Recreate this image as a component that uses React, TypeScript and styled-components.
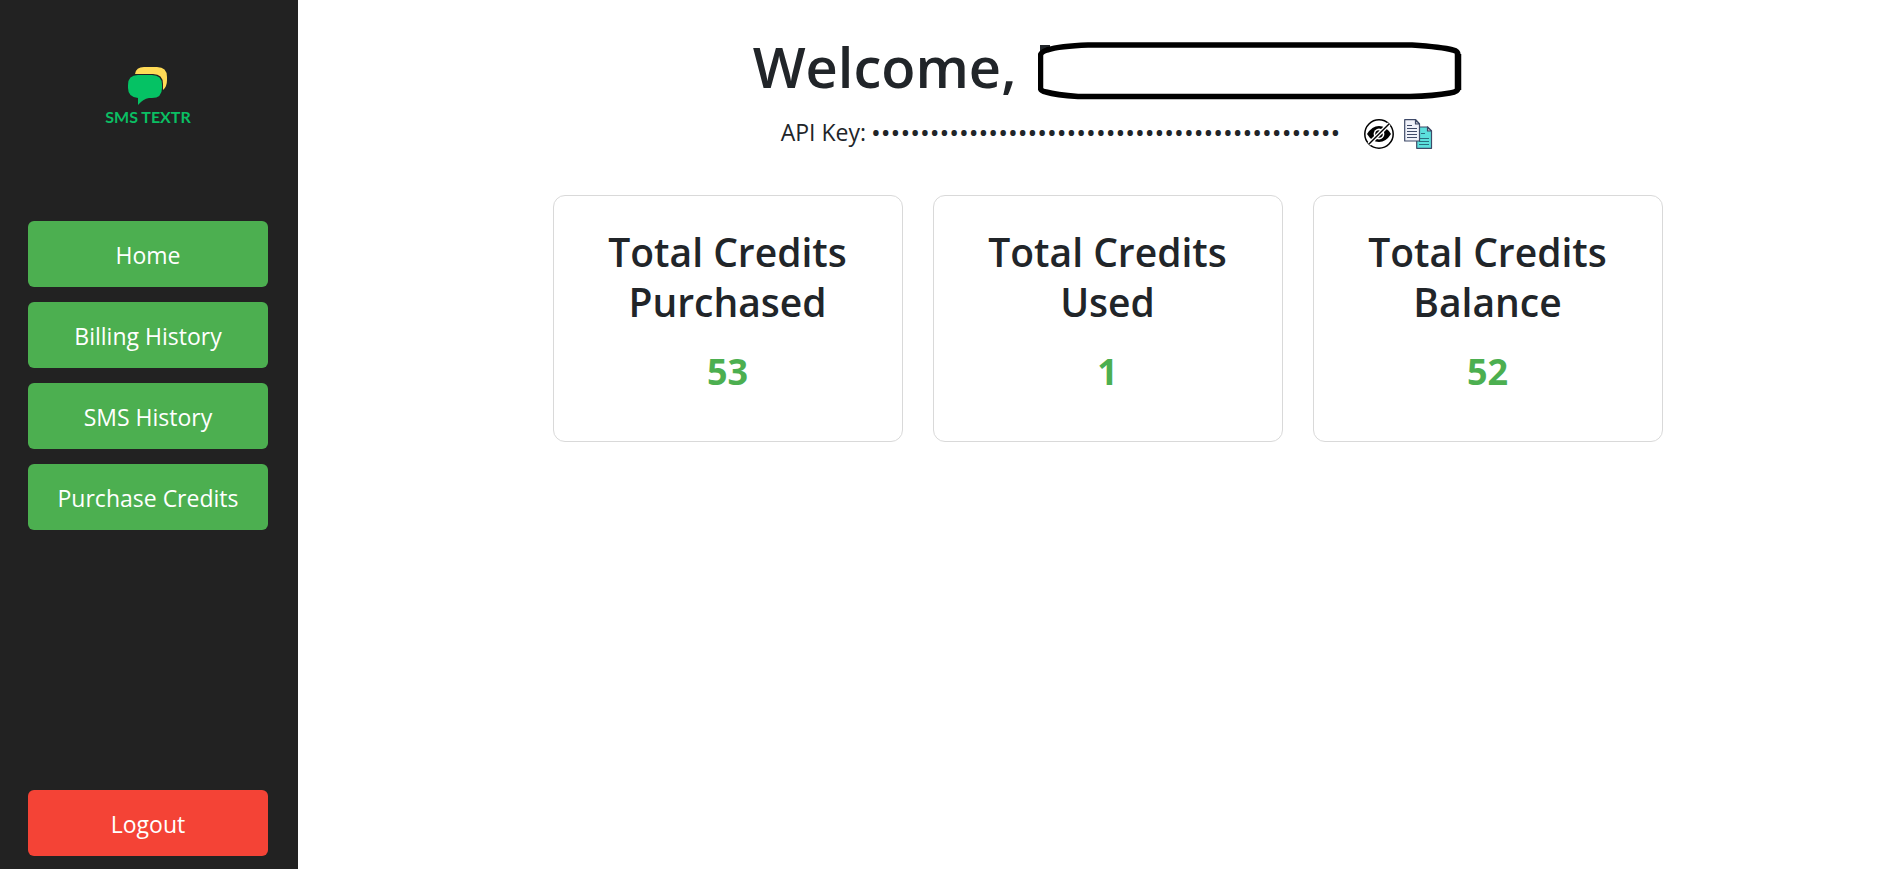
import React from "react";
import styled, { createGlobalStyle } from "styled-components";

const GlobalStyle = createGlobalStyle`
  *, *::before, *::after { box-sizing: border-box; }
  body {
    margin: 0;
    background: #fff;
    color: #212529;
    font-family: "Segoe UI", "Open Sans", "Noto Sans", sans-serif;
    font-size: 23px;
    line-height: 36px;
  }
`;

const Page = styled.div`
  display: flex;
  min-height: 100vh;
`;

const Sidebar = styled.aside`
  display: flex;
  flex-direction: column;
  flex: none;
  width: 298px;
  padding: 67px 30px 13px 28px;
  background: #222;
`;

const Brand = styled.a`
  display: flex;
  flex-direction: column;
  align-items: center;
  height: 154px;
  color: #0abf63;
  font-family: Lato, sans-serif;
  font-size: 16px;
  font-weight: 700;
  line-height: 20px;
  text-decoration: none;
`;

const Nav = styled.nav`
  display: flex;
  flex-direction: column;
  gap: 15px;
`;

const SideButton = styled.button<{ $danger?: boolean }>`
  width: 100%;
  height: 66px;
  padding: 2px 0 0;
  border: 0;
  border-radius: 6px;
  background: ${(p) => (p.$danger ? "#f44336" : "#4caf50")};
  color: #fff;
  font: inherit;
  cursor: pointer;
  ${(p) => p.$danger && "margin-top: auto;"}
`;

const Main = styled.main`
  display: flex;
  flex-direction: column;
  align-items: center;
  flex: 1;
  padding: 30px 0 30px 40px;
`;

const Title = styled.h1`
  display: flex;
  align-items: flex-end;
  gap: 22px;
  margin: 0 0 8px;
  font-size: 56px;
  font-weight: 600;
  line-height: 72px;
`;

const KeyRow = styled.div`
  display: flex;
  align-items: center;
  height: 44px;
  margin-bottom: 41px;
`;

const Dots = styled.span`
  margin: 0 24px 0 5px;
  font-size: 26px;
`;

const IconButton = styled.button`
  display: flex;
  width: 30px;
  height: 30px;
  margin: 4px 10px 0 0;
  padding: 0;
  border: 0;
  background: none;
  cursor: pointer;
  &:last-child { margin-right: 0; }
`;

const Cards = styled.div`
  display: flex;
  flex-wrap: wrap;
  justify-content: center;
  gap: 30px;
`;

const Card = styled.section`
  width: 350px;
  min-height: 247px;
  padding: 31px 40px;
  border: 1px solid #d9d9d9;
  border-radius: 12px;
  text-align: center;
`;

const CardTitle = styled.h2`
  margin: 0 0 18px;
  font-size: 39px;
  font-weight: 600;
  line-height: 50px;
`;

const CardValue = styled.p`
  margin: 0;
  color: #4caf50;
  font-size: 36px;
  font-weight: 700;
  line-height: 54px;
`;

const BubblesLogo = () => (
  <svg width="40" height="40" viewBox="0 0 40 40" aria-hidden="true">
    <path d="M16 0H29Q39 0 39 10V13Q39 20 35 23V17Q35 7 25 7H7Q8 0 16 0Z" fill="#ffdb57" />
    <path d="M10 8H24Q34 8 34 18V21Q34 31 24 31H21Q15 32 10 38V31Q0 30 0 21V18Q0 8 10 8Z" fill="#05c264" />
  </svg>
);

const NameOutline = () => (
  <svg width="424" height="60" viewBox="0 0 424 60" aria-hidden="true">
    <path d="M2 3H12V7L2 11Z" fill="#212529" />
    <path
      d="M2.500 13Q3 10 9 8Q22 4 50 3H374Q404 5 415 8Q420 9 420 13V46Q420 50 412 51Q396 54 372 54.500H40Q18 53 8 50Q2.500 49 2.500 46Z"
      fill="none"
      stroke="#000"
      strokeWidth="5.500"
    />
    <path d="M420 12V48" stroke="#000" strokeWidth="6.500" />
  </svg>
);

const HiddenIcon = () => (
  <svg width="30" height="30" viewBox="0 0 30 30" aria-hidden="true">
    <circle cx="15" cy="15" r="14.200" fill="#fff" stroke="#000" strokeWidth="1.500" />
    <path d="M3 15Q8 7 15 7T27 15Q22 23 15 23T3 15Z" fill="#000" />
    <circle cx="15" cy="15" r="5.400" fill="#fff" />
    <circle cx="15" cy="15" r="3.800" fill="#000" />
    <path d="M15 15V11.500A3.500 3.500 0 0 1 18.500 15Z" fill="#fff" />
    <path d="M5 25L25 5" stroke="#fff" strokeWidth="4" />
    <path d="M5 25L25 5" stroke="#000" strokeWidth="1.500" />
  </svg>
);

const CopyIcon = () => (
  <svg width="30" height="30" viewBox="0 0 30 30" aria-hidden="true">
    <g stroke="#3f4a68" strokeWidth="1.200" strokeLinejoin="round">
      <path d="M12.700 8H23.500L27.500 12V29.300H12.700Z" fill="#5ce0dd" />
      <path d="M23.500 8V12H27.500Z" fill="#c9d0d8" />
      <path d="M15 19.500H25M15 22.500H25M15 25.500H25M17 14.500H21" stroke="#2c6f80" />
      <path d="M0.700 0.700H11.500L15.500 5V22H0.700Z" fill="#f0f2fa" />
      <path d="M11.500 0.700V5H15.500Z" fill="#c9c9cf" />
      <path d="M3 6.500H8M3 9.500H13M3 12.500H13M3 15.500H13M3 18.500H13" />
    </g>
  </svg>
);

const navItems = ["Home", "Billing History", "SMS History", "Purchase Credits"];

const totals = [
  { label: "Purchased", value: 53 },
  { label: "Used", value: 1 },
  { label: "Balance", value: 52 },
];

export default function App() {
  return (
    <>
      <GlobalStyle />
      <Page>
        <Sidebar>
          <Brand href="#">
            <BubblesLogo />
            SMS TEXTR
          </Brand>
          <Nav>
            {navItems.map((item) => (
              <SideButton key={item} type="button">{item}</SideButton>
            ))}
          </Nav>
          <SideButton type="button" $danger>Logout</SideButton>
        </Sidebar>
        <Main>
          <Title>
            Welcome,
            <NameOutline />
          </Title>
          <KeyRow>
            <span>API Key:</span>
            <Dots>{"•".repeat(48)}</Dots>
            <IconButton type="button" aria-label="Show API key"><HiddenIcon /></IconButton>
            <IconButton type="button" aria-label="Copy API key"><CopyIcon /></IconButton>
          </KeyRow>
          <Cards>
            {totals.map((t) => (
              <Card key={t.label}>
                <CardTitle>Total Credits {t.label}</CardTitle>
                <CardValue>{t.value}</CardValue>
              </Card>
            ))}
          </Cards>
        </Main>
      </Page>
    </>
  );
}
